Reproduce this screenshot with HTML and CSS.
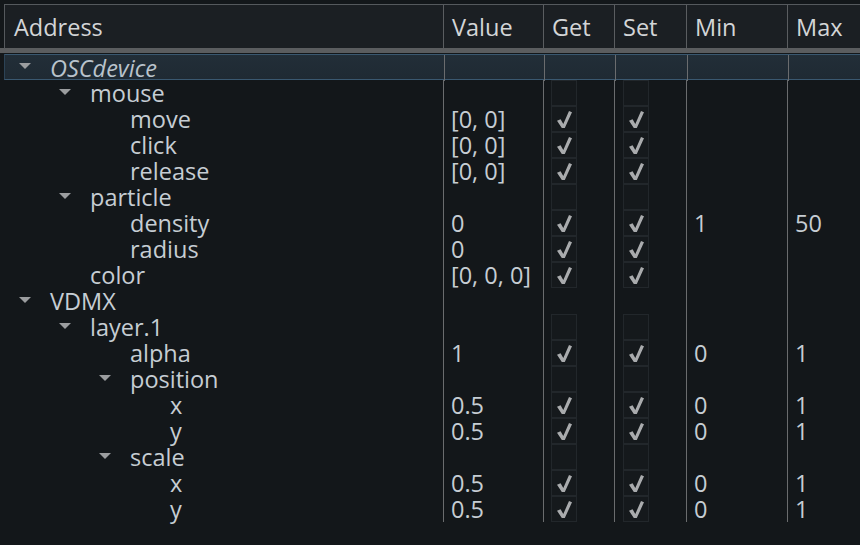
FILE: index.html
```html
<!DOCTYPE html>
<html>
<head>
<meta charset="utf-8">
<link rel="stylesheet" href="styles.css">
</head>
<body>
<div class="view">
  <div class="row head">
    <div class="c c1">Address</div>
    <div class="c">Value</div>
    <div class="c">Get</div>
    <div class="c">Set</div>
    <div class="c">Min</div>
    <div class="c">Max</div>
  </div>
  <div class="bar"></div>
  <div class="body">
    <div class="row sel">
      <div class="c c1 l0"><span class="arr"></span><i>OSCdevice</i></div>
      <div class="c"></div><div class="c"></div><div class="c"></div><div class="c"></div><div class="c"></div>
    </div>
    <div class="row">
      <div class="c c1 l1"><span class="arr"></span>mouse</div>
      <div class="c"></div><div class="c"><span class="box"></span></div><div class="c"><span class="box"></span></div><div class="c"></div><div class="c"></div>
    </div>
    <div class="row">
      <div class="c c1 l2"><span class="sp"></span>move</div>
      <div class="c">[0, 0]</div><div class="c"><span class="box on"></span></div><div class="c"><span class="box on"></span></div><div class="c"></div><div class="c"></div>
    </div>
    <div class="row">
      <div class="c c1 l2"><span class="sp"></span>click</div>
      <div class="c">[0, 0]</div><div class="c"><span class="box on"></span></div><div class="c"><span class="box on"></span></div><div class="c"></div><div class="c"></div>
    </div>
    <div class="row">
      <div class="c c1 l2"><span class="sp"></span>release</div>
      <div class="c">[0, 0]</div><div class="c"><span class="box on"></span></div><div class="c"><span class="box on"></span></div><div class="c"></div><div class="c"></div>
    </div>
    <div class="row">
      <div class="c c1 l1"><span class="arr"></span>particle</div>
      <div class="c"></div><div class="c"><span class="box"></span></div><div class="c"><span class="box"></span></div><div class="c"></div><div class="c"></div>
    </div>
    <div class="row">
      <div class="c c1 l2"><span class="sp"></span>density</div>
      <div class="c">0</div><div class="c"><span class="box on"></span></div><div class="c"><span class="box on"></span></div><div class="c">1</div><div class="c">50</div>
    </div>
    <div class="row">
      <div class="c c1 l2"><span class="sp"></span>radius</div>
      <div class="c">0</div><div class="c"><span class="box on"></span></div><div class="c"><span class="box on"></span></div><div class="c"></div><div class="c"></div>
    </div>
    <div class="row">
      <div class="c c1 l1"><span class="sp"></span>color</div>
      <div class="c">[0, 0, 0]</div><div class="c"><span class="box on"></span></div><div class="c"><span class="box on"></span></div><div class="c"></div><div class="c"></div>
    </div>
    <div class="row">
      <div class="c c1 l0"><span class="arr"></span>VDMX</div>
      <div class="c"></div><div class="c"></div><div class="c"></div><div class="c"></div><div class="c"></div>
    </div>
    <div class="row">
      <div class="c c1 l1"><span class="arr"></span>layer.1</div>
      <div class="c"></div><div class="c"><span class="box"></span></div><div class="c"><span class="box"></span></div><div class="c"></div><div class="c"></div>
    </div>
    <div class="row">
      <div class="c c1 l2"><span class="sp"></span>alpha</div>
      <div class="c">1</div><div class="c"><span class="box on"></span></div><div class="c"><span class="box on"></span></div><div class="c">0</div><div class="c">1</div>
    </div>
    <div class="row">
      <div class="c c1 l2"><span class="arr"></span>position</div>
      <div class="c"></div><div class="c"><span class="box"></span></div><div class="c"><span class="box"></span></div><div class="c"></div><div class="c"></div>
    </div>
    <div class="row">
      <div class="c c1 l3"><span class="sp"></span>x</div>
      <div class="c">0.5</div><div class="c"><span class="box on"></span></div><div class="c"><span class="box on"></span></div><div class="c">0</div><div class="c">1</div>
    </div>
    <div class="row">
      <div class="c c1 l3"><span class="sp"></span>y</div>
      <div class="c">0.5</div><div class="c"><span class="box on"></span></div><div class="c"><span class="box on"></span></div><div class="c">0</div><div class="c">1</div>
    </div>
    <div class="row">
      <div class="c c1 l2"><span class="arr"></span>scale</div>
      <div class="c"></div><div class="c"><span class="box"></span></div><div class="c"><span class="box"></span></div><div class="c"></div><div class="c"></div>
    </div>
    <div class="row">
      <div class="c c1 l3"><span class="sp"></span>x</div>
      <div class="c">0.5</div><div class="c"><span class="box on"></span></div><div class="c"><span class="box on"></span></div><div class="c">0</div><div class="c">1</div>
    </div>
    <div class="row">
      <div class="c c1 l3"><span class="sp"></span>y</div>
      <div class="c">0.5</div><div class="c"><span class="box on"></span></div><div class="c"><span class="box on"></span></div><div class="c">0</div><div class="c">1</div>
    </div>
  </div>
</div>
</body>
</html>
```
FILE: styles.css
```css
* { box-sizing: border-box; }
html, body { margin: 0; padding: 0; }
body {
  width: 860px;
  height: 545px;
  overflow: hidden;
  background: #13171a;
  font-family: "Open Sans", "Noto Sans", sans-serif;
  font-size: 23.5px;
  color: #c6cdd3;
}
.view {
  padding: 4px 0 0 4px;
  background: #13171a;
}
.row {
  display: grid;
  grid-template-columns: 439px 100px 71px 72px 101px 1fr;
  height: 26px;
  line-height: 26px;
}
.row .c {
  border-left: 1px solid #6a6c6e;
  padding-left: 7px;
  white-space: nowrap;
  display: flex;
  align-items: center;
}
.row .c1 { border-left: none; }
.head {
  height: 44px;
  background: #1b1f23;
  border-top: 1px solid #55595d;
  color: #d3d5d7;
}
.head .c { padding-left: 8px; line-height: 43px; border-left-color: #5a5d60; padding-top: 1px; }
.head .c1 { border-left: 1px solid #55595d; padding-left: 9px; }
.bar {
  height: 5px;
  background: #5b5d5f;
  margin-left: -4px;
}
.body { padding-top: 1px; }
.sel {
  background: linear-gradient(#222e38, #1f2a33);
  border-top: 1px solid #3a5870;
  border-bottom: 1px solid #3a5870;
  border-left: 1px solid #2c4356;
  line-height: 24px;
}
.sel i { color: #b9c3cc; }
.l0 { padding-left: 14px !important; }
.l1 { padding-left: 54px !important; }
.l2 { padding-left: 94px !important; }
.l3 { padding-left: 134px !important; }
.sel .l0 { padding-left: 13px !important; }
.arr, .sp {
  display: inline-block;
  width: 32px;
  height: 26px;
  flex: none;
  position: relative;
}
.arr::before {
  content: "";
  position: absolute;
  left: 1px;
  top: 9px;
  border-left: 6px solid transparent;
  border-right: 6px solid transparent;
  border-top: 6px solid #9b9d9f;
}
.sel .arr::before { top: 8px; }
.box {
  display: block;
  width: 26px;
  height: 26px;
  border: 1px solid #22272b;
  background: #15191c;
  margin-left: 0;
  position: relative;
}
.row .c:nth-child(4) .box { margin-left: 1px; }
.box.on::after {
  content: "";
  position: absolute;
  left: 5px;
  top: 4px;
  width: 15px;
  height: 17px;
  background: #a9abad;
  clip-path: polygon(0% 58%, 24% 48%, 42% 76%, 80% 0%, 100% 8%, 52% 100%, 32% 100%);
}
```
